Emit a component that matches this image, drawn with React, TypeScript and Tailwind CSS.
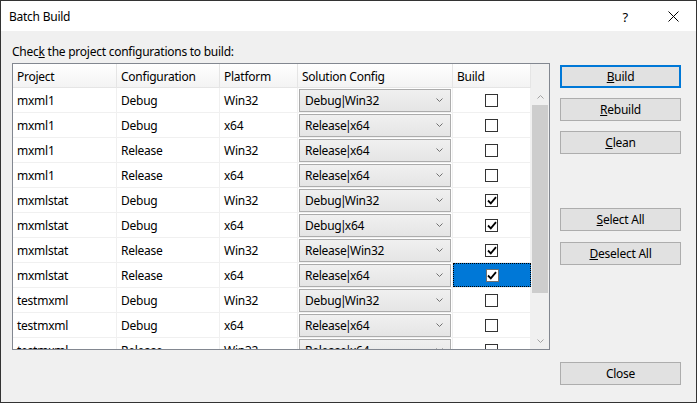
import React from 'react';

type Row = {
  project: string;
  config: string;
  platform: string;
  solution: string;
  build: boolean;
  selected?: boolean;
};

const rows: Row[] = [
  { project: 'mxml1', config: 'Debug', platform: 'Win32', solution: 'Debug|Win32', build: false },
  { project: 'mxml1', config: 'Debug', platform: 'x64', solution: 'Release|x64', build: false },
  { project: 'mxml1', config: 'Release', platform: 'Win32', solution: 'Release|x64', build: false },
  { project: 'mxml1', config: 'Release', platform: 'x64', solution: 'Release|x64', build: false },
  { project: 'mxmlstat', config: 'Debug', platform: 'Win32', solution: 'Debug|Win32', build: true },
  { project: 'mxmlstat', config: 'Debug', platform: 'x64', solution: 'Debug|x64', build: true },
  { project: 'mxmlstat', config: 'Release', platform: 'Win32', solution: 'Release|Win32', build: true },
  { project: 'mxmlstat', config: 'Release', platform: 'x64', solution: 'Release|x64', build: true, selected: true },
  { project: 'testmxml', config: 'Debug', platform: 'Win32', solution: 'Debug|Win32', build: false },
  { project: 'testmxml', config: 'Debug', platform: 'x64', solution: 'Release|x64', build: false },
  { project: 'testmxml', config: 'Release', platform: 'Win32', solution: 'Release|x64', build: false },
];

function Chevron({ up, color = '#707070' }: { up?: boolean; color?: string }) {
  return (
    <svg width="7" height="4" viewBox="0 0 7 4">
      <path d={up ? 'M0.5 3.5 L3.5 0.5 L6.5 3.5' : 'M0.5 0.5 L3.5 3.5 L6.5 0.5'} fill="none" stroke={color} strokeWidth="1" />
    </svg>
  );
}

function CheckBox({ checked, selected }: { checked: boolean; selected?: boolean }) {
  return (
    <div
      className={`w-[13px] h-[13px] border bg-white flex items-center justify-center ${
        selected ? 'border-[#707070]' : 'border-[#333333]'
      }`}
    >
      {checked && (
        <svg width="10" height="9" viewBox="0 0 10 9">
          <path d="M1 4.5 L3.8 7.3 L9 1.2" fill="none" stroke="#000" strokeWidth="1.8" />
        </svg>
      )}
    </div>
  );
}

function Button({ children, className = '', primary }: { children: React.ReactNode; className?: string; primary?: boolean }) {
  return (
    <div
      className={`h-[23px] w-[121px] bg-[#e1e1e1] flex items-center justify-center pt-[1px] ${
        primary ? 'border-2 border-[#0078d7]' : 'border border-[#adadad]'
      } ${className}`}
    >
      {children}
    </div>
  );
}

function SolutionText({ value }: { value: string }) {
  const [a, b] = value.split('|');
  return (
    <span className="pt-[2px]">
      {a}
      <span className="mx-[-1.5px]">|</span>
      {b}
    </span>
  );
}

export default function App() {
  return (
    <div className="w-[697px] h-[403px] border border-[#333333] bg-[#f0f0f0] flex flex-col font-['Noto_Sans',sans-serif] text-[12px] tracking-[-0.25px] text-black leading-none">
      {/* title bar */}
      <div className="h-[30px] bg-white flex items-center pt-[2px]">
        <span className="pl-[8px] text-[12px]">Batch Build</span>
        <span className="ml-auto mr-[40px] text-[13px]">?</span>
        <svg className="mr-[17px] mb-[2px]" width="11" height="11" viewBox="0 0 11 11">
          <path d="M0.5 0.5 L10.5 10.5 M10.5 0.5 L0.5 10.5" stroke="#000" strokeWidth="1" />
        </svg>
      </div>

      <div className="flex pl-[11px]">
        {/* left */}
        <div className="flex flex-col">
          <div className="h-[20px] mt-[10px] flex items-center pt-[2px]">
            <span>
              Chec<span className="underline">k</span> the project configurations to build:
            </span>
          </div>
          <div className="mt-[2px] w-[538px] h-[287px] border border-[#828790] bg-white flex overflow-hidden">
            <div className="w-[518px] flex flex-col">
              <div className="h-[24px] shrink-0 flex bg-gradient-to-b from-white to-[#f3f3f3] border-b border-[#e5e5e5]">
                <div className="w-[104px] border-r border-[#e5e5e5] pl-[4px] pt-[2px] flex items-center">Project</div>
                <div className="w-[103px] border-r border-[#e5e5e5] pl-[4px] pt-[2px] flex items-center">Configuration</div>
                <div className="w-[78px] border-r border-[#e5e5e5] pl-[4px] pt-[2px] flex items-center">Platform</div>
                <div className="w-[155px] border-r border-[#e5e5e5] pl-[4px] pt-[2px] flex items-center">Solution Config</div>
                <div className="w-[78px] border-r border-[#e5e5e5] pl-[4px] pt-[2px] flex items-center">Build</div>
              </div>
              {rows.map((r, i) => (
                <div key={i} className="h-[25px] shrink-0 flex border-b border-[#f0f0f0]">
                  <div className="w-[104px] border-r border-[#f0f0f0] pl-[4px] pt-[2px] flex items-center">{r.project}</div>
                  <div className="w-[103px] border-r border-[#f0f0f0] pl-[4px] pt-[2px] flex items-center">{r.config}</div>
                  <div className="w-[78px] border-r border-[#f0f0f0] pl-[4px] pt-[2px] flex items-center">{r.platform}</div>
                  <div className="w-[155px] border-r border-[#f0f0f0] px-[1px] flex items-center">
                    <div className="w-full h-[23px] border border-[#acacac] bg-gradient-to-b from-[#f0f0f0] to-[#e5e5e5] flex items-center pl-[5px] pr-[7px]">
                      <SolutionText value={r.solution} />
                      <span className="ml-auto">
                        <Chevron />
                      </span>
                    </div>
                  </div>
                  <div
                    className={`w-[78px] flex items-center justify-center ${
                      r.selected ? 'bg-[#0078d7] border border-dotted border-black' : 'border-r border-[#f0f0f0]'
                    }`}
                  >
                    <CheckBox checked={r.build} selected={r.selected} />
                  </div>
                </div>
              ))}
            </div>
            {/* scrollbar */}
            <div className="w-[18px] flex flex-col bg-[#f0f0f0]">
              <div className="h-[24px] shrink-0" />
              <div className="h-[17px] shrink-0 flex items-center justify-center">
                <Chevron up color="#a3a3a3" />
              </div>
              <div className="h-[188px] shrink-0 mx-[1px] bg-[#cdcdcd]" />
              <div className="flex-1" />
              <div className="h-[17px] shrink-0 flex items-center justify-center">
                <Chevron color="#a3a3a3" />
              </div>
            </div>
          </div>
        </div>

        {/* right buttons */}
        <div className="ml-[10px] flex flex-col">
          <Button primary className="mt-[34px]">
            <span>
              <span className="underline">B</span>uild
            </span>
          </Button>
          <Button className="mt-[10px]">
            <span>
              <span className="underline">R</span>ebuild
            </span>
          </Button>
          <Button className="mt-[10px]">
            <span>
              <span className="underline">C</span>lean
            </span>
          </Button>
          <Button className="mt-[54px]">
            <span>
              <span className="underline">S</span>elect All
            </span>
          </Button>
          <Button className="mt-[11px]">
            <span>
              <span className="underline">D</span>eselect All
            </span>
          </Button>
          <Button className="mt-[97px]">Close</Button>
        </div>
      </div>
    </div>
  );
}
